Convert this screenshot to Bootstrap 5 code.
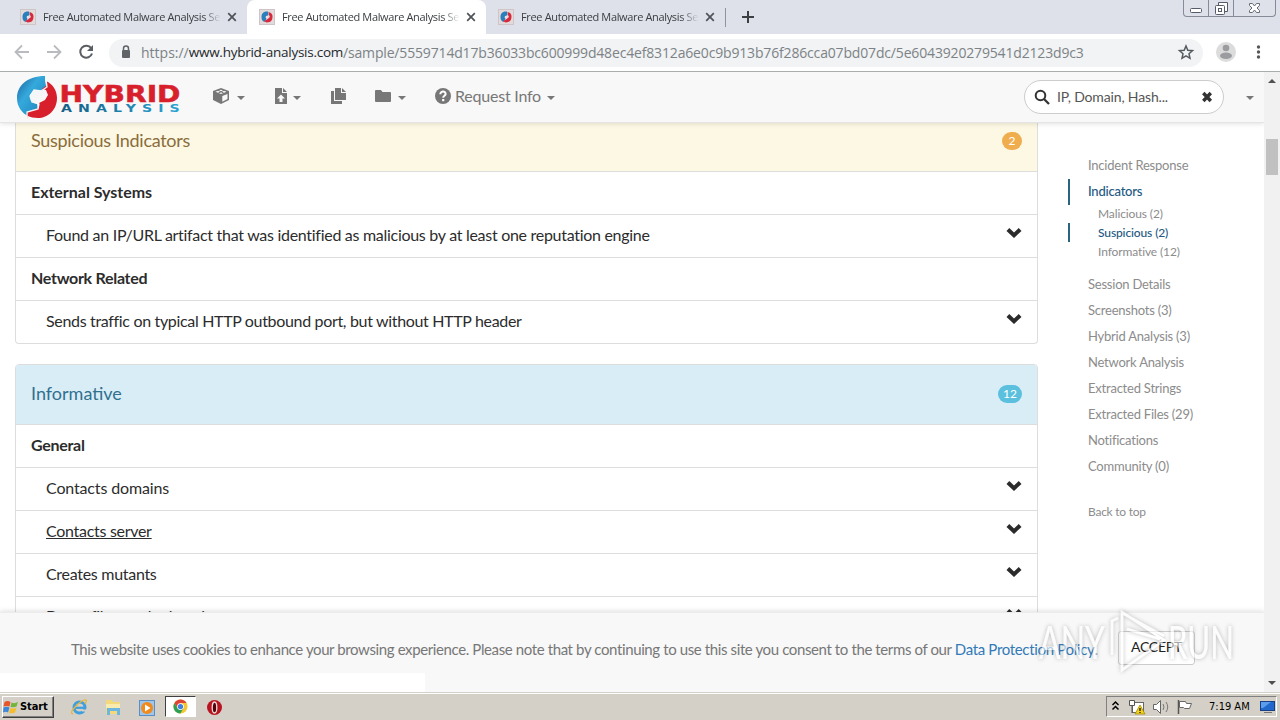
<!DOCTYPE html>
<html lang="en">
<head>
<meta charset="utf-8">
<meta name="viewport" content="width=device-width, initial-scale=1">
<title>Free Automated Malware Analysis Service</title>
<link href="https://cdn.jsdelivr.net/npm/bootstrap@5.3.0/dist/css/bootstrap.min.css" rel="stylesheet">
<style>
body{width:1280px;height:720px;overflow:hidden;font-family:Lato,"Open Sans",sans-serif;color:#2c2c2c;background:#fff;line-height:1.3}
svg{display:block;flex:none}
/* browser chrome */
.tabstrip{height:34px;background:#dee1e9;font:11px/14px "Open Sans",sans-serif;letter-spacing:-.35px;color:#3c4043}
.btab{width:239px;height:34px;padding:0 10px 0 12px}
.btab.first{width:247px;padding-left:20px}
.btab.current{background:#fff;border-radius:8px 8px 0 0}
.btab-title{width:178px;margin-left:7px;white-space:nowrap;-webkit-mask-image:linear-gradient(90deg,#000 160px,transparent 178px);mask-image:linear-gradient(90deg,#000 160px,transparent 178px)}
.winbtns{width:93px;height:17px;border:1px solid #858b98;border-top:0;border-radius:0 0 4px 4px;margin-right:4px}
.winbtns>div{border-right:1px solid #858b98;height:16px}
.winbtns>div:last-child{border:0}
.toolbar{height:38px;border-bottom:1px solid #a9aeac;background:#fff}
.omnibox{width:1094px;height:28px;border-radius:14px;background:#f1f3f4;font:14px/27px "Open Sans",sans-serif;color:#7d8286;white-space:nowrap}
.url-host{color:#26282b;font-size:13.5px;letter-spacing:-.255px}
.url-path{letter-spacing:-.165px}
/* site */
.viewport{height:620px;position:relative;overflow:hidden}
.site{width:1264px}
.topnav{height:51px;background:#f8f8f8;border-bottom:1px solid #e4e4e4;color:#777;box-shadow:0 1px 5px rgba(0,0,0,.12);position:relative;z-index:2}
.topnav .tool{margin-bottom:2px}
.topnav .label{font-size:16px;letter-spacing:-.22px;margin:0 0 2px 4px}
.caret{width:0;height:0;border:4px solid transparent;border-top-color:#777;border-bottom:0;margin:1px 0 0 7px}
.caret.tight{margin-left:6px}
.caret.last{margin:1px 10px 0 22px}
.gap-tool{margin-left:29px}
.gap-copy{margin-left:24px}
.search{width:200px;height:34px;border:1px solid #ccc;border-radius:17px;background:#fff;font-size:14px;letter-spacing:-.15px;color:#555}
.results{width:1023px;margin-left:15px}
.panel{border:1px solid #ddd;border-radius:4px;overflow:hidden}
.panel.next{margin-top:20px}
.panel.cut{border-top:0;border-radius:0 0 4px 4px}
.panel-top{height:59px;padding:0 15px 1px;font-size:18px}
.panel.cut .panel-top{height:48px;padding-bottom:12px}
.susp{background:#fcf8e3;color:#8a6d3b;letter-spacing:-.29px}
.inf{background:#d9edf7;color:#31708f}
.count{height:18px;border-radius:9px;color:#fff;font-size:12px;line-height:18px;text-align:center;letter-spacing:0}
.count.o{background:#f0ad4e;width:20px}.count.b{background:#5bc0de;width:24px}
.prow{height:43px;border-top:1px solid #ddd;padding:0 15px 1px 30px;font-size:16px;letter-spacing:-.29px}
.prow.head{padding-left:15px;font-weight:700}
.prow.last{padding-bottom:3px}
.prow .wide{letter-spacing:-.15px}
.prow .tight{letter-spacing:-.33px}
.prow.head .wide{letter-spacing:-.03px}
.prow svg{margin-top:-6px}
.toc{width:196px;margin:30px 0 0 30px;font-size:13px;color:#8c8c8c;letter-spacing:-.22px}
.toc div{height:26px;line-height:25px;padding-left:20px}
.toc .sub{height:19px;line-height:19px;font-size:12px;padding-left:30px;letter-spacing:-.12px}
.toc .on{color:#23587f;border-left:2px solid #2a6480;padding-left:18px;font-weight:500}
.toc .sub.on{padding-left:28px}
.toc .subs{height:auto;padding:0;margin:-1px 0 11px}
.toc .top{padding-left:20px;margin-top:22px;letter-spacing:-.25px}
.cookies{left:0;bottom:0;width:1264px;height:80px;background:#f8f8f8;border-top:1px solid #ececec;box-shadow:0 -1px 5px rgba(0,0,0,.13);z-index:3;font-size:15px;letter-spacing:-.385px;color:#777;white-space:nowrap;padding:0 0 6px 71px}
.cookies .policy{color:#337ab7;letter-spacing:-.33px}
.accept{width:77px;height:34px;border:1px solid #ccc;border-radius:3px;background:#fff;color:#222;font-size:14px;letter-spacing:-.25px;margin:-4px 69px 0 0;padding:0}
.wmark{left:1030px;top:530px;z-index:5}
.status{left:0;bottom:0;width:425px;height:19px;background:#fff;z-index:4}
.scroll{right:0;top:0;width:16px;height:620px;background:#f1f1f1;z-index:4}
.thumb{left:2px;top:67px;width:12px;height:36px;background:#c1c1c1}
/* taskbar */
.taskbar{height:28px;background:#d4d0c8;border-top:1px solid #d4d0c8;box-shadow:inset 0 1px #fff;font:11px/14px "DejaVu Sans Condensed","DejaVu Sans",sans-serif;color:#000;padding-top:3px}
.start{width:52px;height:22px;border:1px solid;border-color:#fff #404040 #404040 #fff;box-shadow:inset -1px -1px #808080;font-weight:700;letter-spacing:-.1px;margin-left:2px}
.running{width:31px;height:21px;background:#fff;border:1px solid;border-color:#404040 #fff #fff #404040;margin-left:1px}
.clock{margin-left:6px}
.tray{width:171px;height:21px;border:1px solid;border-color:#808080 #fff #fff #808080;margin-right:3px}
</style>
</head>
<body class="d-flex flex-column">
<svg width="0" height="0" class="position-absolute">
<defs>
<linearGradient id="blu" x1="0" y1="0" x2="1" y2="1"><stop offset="0" stop-color="#1c5f9c"/><stop offset=".4" stop-color="#35a9dc"/><stop offset="1" stop-color="#187fb8"/></linearGradient>
<linearGradient id="teal"><stop offset="0" stop-color="#145f86"/><stop offset="1" stop-color="#27a4d4"/></linearGradient>
<symbol id="fav" viewBox="0 0 16 16"><rect width="16" height="16" fill="#cfc5c6"/><rect x="1" y="1" width="14" height="14" fill="#e3dadb"/><path d="M9 2.500C4 2 2.500 5 2.500 8c0 3 1 4 3 5l2-3-1-2 3-2z" fill="#2a80bd"/><path d="M7.500 13.500c5 0 6-3 6-6 0-2-1-4-4-4.500l.5 3 1 2-3 2.500-3 1.500z" fill="#d8283c"/><circle cx="8" cy="8" r="1.200" fill="#efdfe8"/></symbol>
<symbol id="x" viewBox="0 0 10 10"><path d="M1.200 1.200l7.600 7.600M8.800 1.200L1.200 8.800" stroke="#4f5358" stroke-width="1.700"/></symbol>
<symbol id="chev" viewBox="0 0 16 11"><path d="M.5 3.900L3.300 1 8 5.600 12.700 1l2.800 2.900L8 11z" fill="#2b2b2b"/></symbol>
</defs></svg>

<header class="tabstrip d-flex">
  <div class="btab first d-flex align-items-center"><svg width="16" height="16"><use href="#fav"/></svg><span class="btab-title">Free Automated Malware Analysis Se</span><svg class="ms-auto" width="10" height="10"><use href="#x"/></svg></div>
  <div class="btab current d-flex align-items-center"><svg width="16" height="16"><use href="#fav"/></svg><span class="btab-title">Free Automated Malware Analysis Se</span><svg class="ms-auto" width="10" height="10"><use href="#x"/></svg></div>
  <div class="btab d-flex align-items-center"><svg width="16" height="16"><use href="#fav"/></svg><span class="btab-title">Free Automated Malware Analysis Se</span><svg class="ms-auto" width="10" height="10"><use href="#x"/></svg></div>
  <svg width="32" height="34"><path d="M.5 8v19" stroke="#8f959c"/><path d="M23 11v12M17 17h12" stroke="#3c4043" stroke-width="2"/></svg>
  <div class="winbtns d-flex ms-auto">
    <div><svg width="24" height="16"><rect x="6.500" y="8.500" width="11" height="4" rx="1" fill="#fff" stroke="#555b68"/></svg></div>
    <div><svg width="24" height="16"><path d="M9.500 5V2.500h9v9H16" fill="#fff" stroke="#555b68"/><rect x="6.500" y="5.500" width="9" height="9" rx="1" fill="#fff" stroke="#555b68"/><rect x="9.500" y="8.500" width="3" height="3" fill="none" stroke="#555b68"/></svg></div>
    <div><svg width="41" height="16"><path d="M15.500 3.500h3l2 2.500 2-2.500h3v2l-2.500 2.500 2.500 2.500v2h-3l-2-2.500-2 2.500h-3v-2l2.500-2.500-2.500-2.500z" fill="#fff" stroke="#666c78"/></svg></div>
  </div>
</header>

<div class="toolbar d-flex align-items-center">
  <svg width="109" height="37" fill="none" stroke="#b9bbbe" stroke-width="1.800"><path d="M29 18H16M22 11.500L15.500 18l6.500 6.500M47 18h13M54 11.500l6.500 6.500-6.500 6.500"/><path d="M91.200 14.200a6 6 0 1 0 .8 5.300" stroke="#5a5d61" stroke-width="2"/><path d="M93 11v6h-6z" fill="#5a5d61" stroke="none"/></svg>
  <div class="omnibox d-flex">
    <svg width="32" height="28"><rect x="13" y="11" width="8" height="8" rx="1" fill="#5f6368"/><path d="M14.500 11V9.500a2.500 2.500 0 0 1 5 0V11" fill="none" stroke="#5f6368" stroke-width="1.500"/></svg>
    <span>https://</span><span class="url-host">www.hybrid-analysis.com</span><span class="url-path">/sample/5559714d17b36033bc600999d48ec4ef8312a6e0c9b913b76f286cca07bd07dc/5e6043920279541d2123d9c3</span>
    <svg class="ms-auto" width="34" height="28"><path d="M17 7l1.800 4.300 4.700.4-3.500 3.100 1 4.500-4-2.400-4 2.400 1-4.500-3.500-3.100 4.700-.4z" fill="none" stroke="#55595e" stroke-width="1.500"/></svg>
  </div>
  <svg width="77" height="37"><circle cx="23" cy="18" r="10" fill="#dcdcdd"/><circle cx="23" cy="14" r="3.300" fill="#9a9c9f"/><ellipse cx="23" cy="21.800" rx="6" ry="3.200" fill="#9a9c9f"/><g fill="#55585c"><circle cx="55.500" cy="13" r="1.700"/><circle cx="55.500" cy="18" r="1.700"/><circle cx="55.500" cy="23" r="1.700"/></g></svg>
</div>

<main class="viewport">
  <div class="site">
    <nav class="topnav d-flex align-items-center">
      <svg width="212" height="50" viewBox="0 0 212 50">
        <path d="M45 4C27 4 17 14 17 26c0 9 5 15 11 18l0-3 10-3-1-6-6-3-1-6 4-5 8 1 4-5-1-6z" fill="url(#blu)"/>
        <path d="M46 9c7 3 11 10 11 17 0 12-9 20-19 20-4 0-8-1-10-2l0 3-1-7 12-4 0-5 6-3 3-5-2-5-4-1 5-4z" fill="#d81f2c"/>
        <path d="M46 7l1 8-6 4-7-1-4 6 2 6 7 2-1 5-11 3v6" fill="none" stroke="#f8f8f8" stroke-width="1.300"/>
        <path d="M34 19l6-1 5 2-1 3-4 1-2 4 0 4-4-1-3-3-1-5z" fill="#f4f6f8"/>
        <text x="59.500" y="29.500" font-family="DejaVu Sans,sans-serif" font-weight="700" font-size="22.500" textLength="121" lengthAdjust="spacingAndGlyphs" fill="#d81f2c" stroke="#d81f2c" stroke-width=".5">HYBRID</text>
        <text transform="translate(61 39.500) scale(1.350 1)" font-family="DejaVu Sans,sans-serif" font-weight="700" font-size="10.500" textLength="88" fill="url(#teal)">ANALYSIS</text>
      </svg>
      <svg class="tool" width="18" height="16" viewBox="0 0 18 16"><path d="M9 0l8 3v9l-8 4-8-4V3z" fill="#777"/><path d="M9 1.800l5.500 2L9 6 3.500 3.800zM10.300 8L15.500 6v5l-5.200 2.700z" fill="#f8f8f8"/><path d="M6 2.300l6 3M12 2.300l-6 3" stroke="#777"/></svg>
      <i class="caret"></i>
      <svg class="tool gap-tool" width="13" height="16"><path d="M1 0h7v5h5v11H1zM9 0l4 4H9z" fill="#777"/><path d="M7 6.500l4 4H8.500V14h-3v-3.500H3z" fill="#f8f8f8"/></svg>
      <i class="caret tight"></i>
      <svg class="tool gap-copy" width="21" height="16" viewBox="-6 0 21 16"><path d="M0 3h3v10h8v3H0zM4 0h6v5h5v7H4zM11 0l4 4h-4z" fill="#777"/></svg>
      <svg class="tool gap-tool" width="17" height="14"><path d="M0 2q0-1 1-1h5l1.500 2H15q1 0 1 1v8q0 1-1 1H1q-1 0-1-1z" fill="#777"/></svg>
      <i class="caret tight"></i>
      <svg class="tool gap-tool" width="16" height="16"><circle cx="8" cy="8" r="8" fill="#777"/><path d="M5.300 6.200C5.300 2.500 11 3 10.600 6.200 10.400 7.800 8.200 7.700 8.200 9.700" fill="none" stroke="#fff" stroke-width="2"/><rect x="7.100" y="11" width="2.200" height="2.200" fill="#fff"/></svg>
      <span class="label">Request Info</span>
      <i class="caret tight"></i>
      <div class="search d-flex align-items-center ms-auto">
        <svg width="32" height="32"><circle cx="15.500" cy="14.500" r="4.800" fill="none" stroke="#333" stroke-width="2"/><path d="M19 18l5 5" stroke="#333" stroke-width="2.300"/></svg>
        <span>IP, Domain, Hash...</span>
        <svg class="ms-auto" width="26" height="32"><path d="M6.300 12l7.500 8M13.800 12l-7.500 8" stroke="#333" stroke-width="3.400"/></svg>
      </div>
      <i class="caret last"></i>
    </nav>
    <div class="d-flex">
      <section class="results">
        <div class="panel cut">
          <div class="panel-top susp d-flex align-items-center justify-content-between"><span>Suspicious Indicators</span><span class="count o">2</span></div>
          <div class="prow head d-flex align-items-center"><span class="wide">External Systems</span></div>
          <div class="prow d-flex align-items-center justify-content-between"><span>Found an IP/URL artifact that was identified as malicious by at least one reputation engine</span><svg width="16" height="11"><use href="#chev"/></svg></div>
          <div class="prow head d-flex align-items-center">Network Related</div>
          <div class="prow d-flex align-items-center justify-content-between"><span class="tight">Sends traffic on typical HTTP outbound port, but without HTTP header</span><svg width="16" height="11"><use href="#chev"/></svg></div>
        </div>
        <div class="panel next">
          <div class="panel-top inf d-flex align-items-center justify-content-between"><span>Informative</span><span class="count b">12</span></div>
          <div class="prow head d-flex align-items-center">General</div>
          <div class="prow d-flex align-items-center justify-content-between"><span class="wide">Contacts domains</span><svg width="16" height="11"><use href="#chev"/></svg></div>
          <div class="prow d-flex align-items-center justify-content-between"><span class="text-decoration-underline">Contacts server</span><svg width="16" height="11"><use href="#chev"/></svg></div>
          <div class="prow d-flex align-items-center justify-content-between"><span>Creates mutants</span><svg width="16" height="11"><use href="#chev"/></svg></div>
          <div class="prow last d-flex align-items-center justify-content-between"><span>Drops files marked as clean</span><svg width="16" height="11"><use href="#chev"/></svg></div>
        </div>
      </section>
      <aside class="toc">
        <div>Incident Response</div>
        <div class="on">Indicators</div>
        <div class="subs">
          <div class="sub">Malicious (2)</div>
          <div class="sub on">Suspicious (2)</div>
          <div class="sub">Informative (12)</div>
        </div>
        <div>Session Details</div>
        <div>Screenshots (3)</div>
        <div>Hybrid Analysis (3)</div>
        <div>Network Analysis</div>
        <div>Extracted Strings</div>
        <div>Extracted Files (29)</div>
        <div>Notifications</div>
        <div>Community (0)</div>
        <div class="sub top">Back to top</div>
      </aside>
    </div>
  </div>
  <div class="cookies position-absolute d-flex align-items-center">
    <span>This website uses cookies to enhance your browsing experience. Please note that by continuing to use this site you consent to the terms of our&nbsp;<span class="policy">Data Protection Policy</span>.</span>
    <button class="accept ms-auto" type="button">ACCEPT</button>
  </div>
  <svg class="wmark position-absolute" width="215" height="75" viewBox="0 0 215 75">
    <defs><filter id="soft" x="-10%" y="-20%" width="120%" height="140%"><feDropShadow dx="0" dy="0" stdDeviation="2.200" flood-color="#555" flood-opacity=".7"/></filter></defs>
    <g filter="url(#soft)" opacity=".6">
      <g fill="#fff" font-family="Lato,sans-serif" font-size="47"><text x="9" y="56.500" textLength="66" lengthAdjust="spacingAndGlyphs">ANY</text><text x="138" y="56.500" textLength="66" lengthAdjust="spacingAndGlyphs">RUN</text></g>
      <path d="M82 53V19l6-3M92 10v58l42-30zM92 11l42 23M97 27l33 10" fill="none" stroke="#fff" stroke-width="2.500"/>
    </g>
  </svg>
  <div class="status position-absolute"></div>
  <div class="scroll position-absolute">
    <svg width="16" height="620"><path d="M4 11l4-4 4 4zM4 609h8l-4 4z" fill="#505050"/></svg>
    <div class="thumb position-absolute"></div>
  </div>
</main>

<footer class="taskbar d-flex">
  <div class="start d-flex align-items-center">
    <svg width="17" height="16"><path d="M1.500 3q3-2 6 0l-1 4.500q-3-1-6 0z" fill="#e8552b"/><path d="M8.500 3.500q3 1.500 6.500-.5l-1.500 4.500q-3 1.500-6 .3z" fill="#74b43a"/><path d="M.5 8.500q3-1.500 6 0L5 13.500q-2-1.500-5 0z" fill="#3d86d8"/><path d="M7.500 9q3 1.200 6-.3L12 13.500q-3 1.500-6 .2z" fill="#f5bd2b"/></svg><span>Start</span>
  </div>
  <svg width="110" height="22">
    <circle cx="25.500" cy="11.500" r="5.500" fill="none" stroke="#3f9fdc" stroke-width="3"/><path d="M21 11.800h10" stroke="#3f9fdc" stroke-width="2.200"/><path d="M28 13.500h5v2h-5z" fill="#d4d0c8"/><path d="M19 18q-4-1 3-8 7-7 10-6 1 1-1 4" fill="none" stroke="#e5b73b" stroke-width="1.300"/>
    <path d="M52 4h6l1 2h7v12H52z" fill="#f3d97c"/><path d="M52 8h14v4H52z" fill="#f9ebad"/><path d="M53 12h13v7h-3v-4h-7v4h-3z" fill="#6cb7df"/>
    <rect x="85.500" y="4.500" width="15" height="15" fill="#9fc6ea" stroke="#5a8fc6"/><circle cx="93" cy="12" r="6" fill="#f08a1d"/><path d="M91 8.500l5.500 3.500-5.500 3.500z" fill="#fff"/>
  </svg>
  <div class="running d-flex justify-content-center align-items-center"><svg width="15" height="15" viewBox="-8 -8 16 16"><circle r="7.500" fill="#f6c62e"/><path d="M-6.500-3.750A7.500 7.500 0 0 1 6.500-3.750H0L-3.200 1.900z" fill="#de4436"/><path d="M-6.500-3.750A7.500 7.500 0 0 0-.2 7.500L3.200 1.900H-3.200z" fill="#2b9f55"/><circle r="3.600" fill="#fff"/><circle r="2.800" fill="#3f7fe0"/></svg></div>
  <svg width="40" height="22"><circle cx="18.500" cy="11.500" r="7.500" fill="#b81420"/><ellipse cx="18.500" cy="11.500" rx="2.300" ry="5.500" fill="#4c060c" stroke="#f1dada" stroke-width="1.300"/></svg>
  <div class="tray d-flex align-items-center ms-auto">
    <svg width="96" height="19"><path d="M5.500 8L8.500 5l3 3M5.500 12.500l3-3 3 3" fill="none" stroke="#000" stroke-width="1.500"/>
      <rect x="25.500" y="5.500" width="11" height="10" fill="#fff" stroke="#666"/><path d="M22.500 3.500h5v5h-5zM25 9v7" fill="#fff" stroke="#555"/><path d="M33 8l5 9H28z" fill="#f2d21a" stroke="#a58a00" stroke-width=".8"/><path d="M33 11v3M33 15v1" stroke="#000" stroke-width="1.200"/>
      <path d="M46.500 7.500h3l4-4v13l-4-4h-3z" fill="#fff" stroke="#666"/><path d="M56 7q2 3 0 6M59 5q3.500 5 0 10" fill="none" stroke="#777"/>
      <path d="M71.500 3v14" stroke="#555" stroke-width="1.500"/><path d="M72.500 4.500h6l1 2h5l-2 5h-5l-1-1h-4z" fill="#fff" stroke="#666"/></svg>
    <span class="clock">7:19 AM</span>
    <svg class="ms-auto" width="18" height="19"><rect x="2.500" y="4.500" width="14" height="9" fill="#2268cc" stroke="#173f86"/><path d="M3 5h10L5 11H3z" fill="#5c9cec"/><path d="M6 15.500h8" stroke="#777"/></svg>
  </div>
</footer>
<script src="https://cdn.jsdelivr.net/npm/bootstrap@5.3.0/dist/js/bootstrap.bundle.min.js"></script>
</body>
</html>
